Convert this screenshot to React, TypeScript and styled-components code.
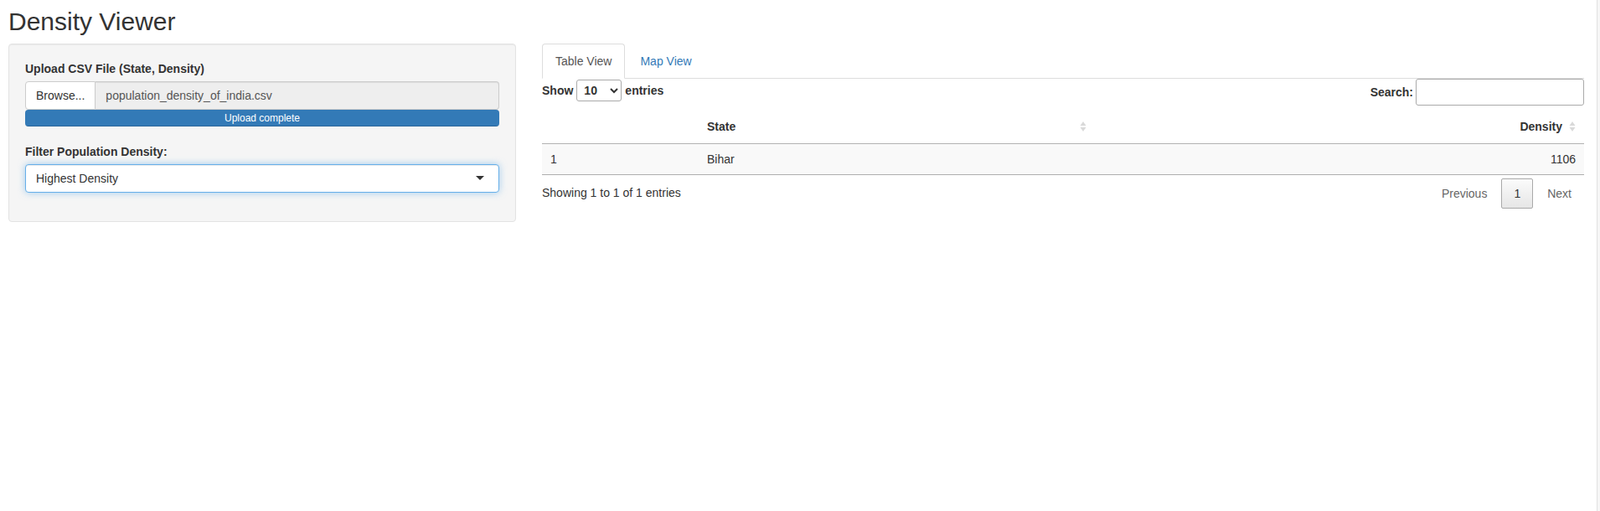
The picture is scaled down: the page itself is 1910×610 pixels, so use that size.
import React from "react";
import styled, { createGlobalStyle } from "styled-components";

const GlobalStyle = createGlobalStyle`
  *, *::before, *::after { box-sizing: border-box; }
  html, body, #root { margin: 0; padding: 0; height: 100%; }
  body {
    font-family: "Liberation Sans", Arial, Helvetica, sans-serif;
    font-size: 14px;
    line-height: 1.42857143;
    color: #333;
    background: #fff;
  }
`;

const Shell = styled.div`
  display: flex;
  min-height: 100%;
`;

const Page = styled.div`
  flex: 1 1 auto;
  min-width: 0;
  padding: 0 15px 0 10px;
`;

const Gutter = styled.div`
  flex: 0 0 4px;
  border-left: 1px solid #e2e2e2;
  background: #f6f6f6;
`;

const Title = styled.h2`
  margin: 9px 0 10px;
  font-size: 30px;
  font-weight: 500;
  line-height: 1.1;
  color: #333;
`;

const Columns = styled.div`
  display: grid;
  grid-template-columns: 606px minmax(0, 1fr);
  column-gap: 31px;
  align-items: start;
`;

const Well = styled.div`
  background: #f5f5f5;
  border: 1px solid #e3e3e3;
  border-radius: 4px;
  padding: 19px;
  box-shadow: inset 0 1px 1px rgba(0, 0, 0, 0.05);
`;

const FormGroup = styled.div<{ $gap: number }>`
  margin-bottom: ${(p) => p.$gap}px;
`;

const FieldLabel = styled.label`
  display: block;
  margin-bottom: 5px;
  font-weight: 700;
`;

const InputGroup = styled.div`
  display: flex;
  height: 34px;
`;

const BrowseButton = styled.button`
  flex: none;
  padding: 6px 12px;
  border: 1px solid #ccc;
  border-radius: 4px 0 0 4px;
  background: #fff;
  color: #333;
  font: inherit;
  line-height: 20px;
`;

const FileName = styled.div`
  flex: 1 1 auto;
  padding: 6px 12px;
  border: 1px solid #ccc;
  border-left: 0;
  border-radius: 0 4px 4px 0;
  background: #eee;
  color: #555;
  line-height: 20px;
  box-shadow: inset 0 1px 1px rgba(0, 0, 0, 0.075);
`;

const Progress = styled.div`
  height: 20px;
  border-radius: 4px;
  background: #f5f5f5;
  overflow: hidden;
  box-shadow: inset 0 1px 2px rgba(0, 0, 0, 0.1);
`;

const ProgressBar = styled.div`
  height: 100%;
  background: #337ab7;
  color: #fff;
  font-size: 12px;
  line-height: 20px;
  text-align: center;
  box-shadow: inset 0 -1px 0 rgba(0, 0, 0, 0.15);
`;

const SelectBox = styled.div`
  display: flex;
  align-items: center;
  justify-content: space-between;
  height: 34px;
  padding: 6px 17px 6px 12px;
  border: 1px solid #66afe9;
  border-radius: 4px;
  background: #fff;
  color: #333;
  line-height: 20px;
  box-shadow: inset 0 1px 1px rgba(0, 0, 0, 0.075), 0 0 8px rgba(102, 175, 233, 0.6);
`;

const Caret = styled.span`
  width: 0;
  height: 0;
  margin-top: -1px;
  border-style: solid;
  border-width: 5px 5px 0 5px;
  border-color: #333 transparent transparent transparent;
`;

const TabList = styled.ul`
  display: flex;
  margin: 0;
  padding: 0;
  list-style: none;
  border-bottom: 1px solid #ddd;
`;

const TabItem = styled.li`
  margin-bottom: -1px;
`;

const TabLink = styled.a<{ $active?: boolean }>`
  display: block;
  margin-right: 2px;
  padding: 10px 15px;
  line-height: 20px;
  border: 1px solid transparent;
  border-radius: 4px 4px 0 0;
  text-decoration: none;
  color: ${(p) => (p.$active ? "#555" : "#337ab7")};
  background: ${(p) => (p.$active ? "#fff" : "transparent")};
  border-color: ${(p) => (p.$active ? "#ddd #ddd transparent" : "transparent")};
  cursor: pointer;
`;

const Controls = styled.div`
  display: flex;
  justify-content: space-between;
  align-items: flex-start;
  margin-bottom: 5px;
`;

const LengthLabel = styled.label`
  display: flex;
  align-items: center;
  gap: 4px;
  height: 26px;
  margin-top: 1px;
  font-weight: 700;
`;

const LengthSelect = styled.select`
  width: 54px;
  height: 26px;
  padding: 0 2px 0 4px;
  border: 1px solid #aaa;
  border-radius: 3px;
  background: transparent;
  color: #333;
  font: inherit;
  font-weight: 700;
`;

const FilterLabel = styled.label`
  display: flex;
  align-items: center;
  gap: 3px;
  font-weight: 700;
`;

const SearchInput = styled.input`
  width: 201px;
  height: 32px;
  padding: 5px;
  border: 1px solid #aaa;
  border-radius: 3px;
  background: transparent;
  font: inherit;
  color: #333;
`;

const Table = styled.table`
  width: 100%;
  border-collapse: separate;
  border-spacing: 0;
  table-layout: fixed;
`;

const HeadCell = styled.th`
  padding: 10px;
  border-bottom: 1px solid rgba(0, 0, 0, 0.3);
  font-weight: 700;
  text-align: left;
  vertical-align: middle;
`;

const HeadInner = styled.div`
  display: flex;
  align-items: center;
  gap: 8px;
`;

const HeadText = styled.span<{ $align: "left" | "right" }>`
  flex: 1 1 auto;
  text-align: ${(p) => p.$align};
`;

const BodyCell = styled.td<{ $align?: "left" | "right" }>`
  padding: 8px 10px;
  background: #f9f9f9;
  border-bottom: 1px solid rgba(0, 0, 0, 0.3);
  text-align: ${(p) => p.$align ?? "left"};
`;

const Footer = styled.div`
  display: flex;
  justify-content: space-between;
  align-items: flex-start;
`;

const Info = styled.div`
  padding-top: 0.755em;
`;

const Paginate = styled.div`
  display: flex;
  padding-top: 0.25em;
`;

const PageButton = styled.a<{ $current?: boolean }>`
  display: block;
  margin-left: 2px;
  min-width: 1.5em;
  padding: 7px 14px;
  line-height: 20px;
  text-align: center;
  border-radius: 2px;
  border: 1px solid ${(p) => (p.$current ? "#a9a9a9" : "transparent")};
  background: ${(p) =>
    p.$current ? "linear-gradient(to bottom, #fbfbfb 0%, #e6e6e6 100%)" : "transparent"};
  color: ${(p) => (p.$current ? "#333" : "#666")};
  cursor: default;
`;

const SortIcon = () => (
  <svg width="8" height="14" viewBox="0 0 8 14" aria-hidden="true">
    <polygon points="4,1 7.5,6 0.5,6" fill="#000" fillOpacity="0.15" />
    <polygon points="0.5,8 7.5,8 4,13" fill="#000" fillOpacity="0.15" />
  </svg>
);

export default function App() {
  return (
    <>
      <GlobalStyle />
      <Shell>
        <Page>
          <Title>Density Viewer</Title>
          <Columns>
            <Well>
              <FormGroup $gap={20}>
                <FieldLabel>Upload CSV File (State, Density)</FieldLabel>
                <InputGroup>
                  <BrowseButton type="button">Browse...</BrowseButton>
                  <FileName>population_density_of_india.csv</FileName>
                </InputGroup>
                <Progress>
                  <ProgressBar>Upload complete</ProgressBar>
                </Progress>
              </FormGroup>
              <FormGroup $gap={15}>
                <FieldLabel>Filter Population Density:</FieldLabel>
                <SelectBox>
                  <span>Highest Density</span>
                  <Caret />
                </SelectBox>
              </FormGroup>
            </Well>
            <div>
              <TabList>
                <TabItem>
                  <TabLink $active>Table View</TabLink>
                </TabItem>
                <TabItem>
                  <TabLink>Map View</TabLink>
                </TabItem>
              </TabList>
              <Controls>
                <LengthLabel>
                  Show
                  <LengthSelect defaultValue="10">
                    <option value="10">10</option>
                    <option value="25">25</option>
                    <option value="50">50</option>
                    <option value="100">100</option>
                  </LengthSelect>
                  entries
                </LengthLabel>
                <FilterLabel>
                  Search:
                  <SearchInput type="search" />
                </FilterLabel>
              </Controls>
              <Table>
                <colgroup>
                  <col style={{ width: "187px" }} />
                  <col style={{ width: "473px" }} />
                  <col />
                </colgroup>
                <thead>
                  <tr>
                    <HeadCell></HeadCell>
                    <HeadCell>
                      <HeadInner>
                        <HeadText $align="left">State</HeadText>
                        <SortIcon />
                      </HeadInner>
                    </HeadCell>
                    <HeadCell>
                      <HeadInner>
                        <HeadText $align="right">Density</HeadText>
                        <SortIcon />
                      </HeadInner>
                    </HeadCell>
                  </tr>
                </thead>
                <tbody>
                  <tr>
                    <BodyCell>1</BodyCell>
                    <BodyCell>Bihar</BodyCell>
                    <BodyCell $align="right">1106</BodyCell>
                  </tr>
                </tbody>
              </Table>
              <Footer>
                <Info>Showing 1 to 1 of 1 entries</Info>
                <Paginate>
                  <PageButton>Previous</PageButton>
                  <PageButton $current>1</PageButton>
                  <PageButton>Next</PageButton>
                </Paginate>
              </Footer>
            </div>
          </Columns>
        </Page>
        <Gutter />
      </Shell>
    </>
  );
}
